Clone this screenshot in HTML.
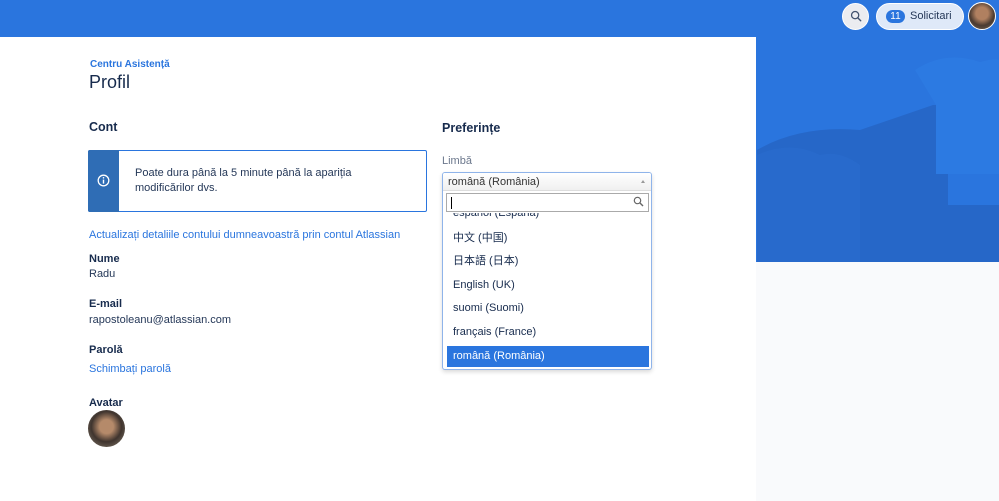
<!DOCTYPE html>
<html><head><meta charset="utf-8"><style>
*{margin:0;padding:0;box-sizing:border-box}
body{width:999px;height:501px;overflow:hidden;background:#f9fafc;font-family:"Liberation Sans","Noto Sans CJK SC",sans-serif;color:#172b4d;position:relative}
.a{position:absolute;white-space:nowrap}
.blue{position:absolute;left:0;top:0;width:999px;height:262px;background:#2a75de;overflow:hidden}
.panel{position:absolute;left:0;top:37px;width:756px;height:464px;background:#fff}
.lab{font-size:11px;font-weight:bold;color:#172b4d}
.val{font-size:11px;color:#253858}
.lnk{font-size:11px;color:#2a75de}
.it{position:absolute;left:4px;width:202px;height:21px;font-size:11px;line-height:21px;padding-left:6px;color:#172b4d}
</style></head><body>
<div class="blue">
<svg width="999" height="262" style="position:absolute;left:0;top:0">
<path d="M915 70 Q945 50 980 62 Q995 58 999 60 V174 H936 V105 Z" fill="#2c7ae2"/>
<path d="M757 262 V150 Q800 125 860 130 L933 105 L936 105 V174 H948 V205 H999 V262 Z" fill="#2667c8"/>
<path d="M757 262 V155 Q790 140 820 155 Q840 150 860 165 V262 Z" fill="#2a6dd0" opacity=".5"/>
</svg>
<div class="a" style="left:842px;top:3px;width:27px;height:27px;border-radius:50%;background:#ebecf0;border:1px solid #fff"></div>
<svg class="a" style="left:850px;top:10px" width="12" height="12" viewBox="0 0 14 14"><circle cx="6" cy="6" r="4.2" fill="none" stroke="#42526e" stroke-width="1.5"/><path d="M9 9 L12.5 12.5" stroke="#42526e" stroke-width="1.6" stroke-linecap="round"/></svg>
<div class="a" style="left:876px;top:3px;width:88px;height:27px;border-radius:14px;background:#dfe9f8;border:1px solid #fff"></div>
<div class="a" style="left:886px;top:10px;width:19px;height:13px;border-radius:7px;background:#2a75de;color:#fff;font-size:10px;text-align:center;line-height:13px">11</div>
<div class="a" style="left:910px;top:9px;font-size:11px;color:#253858;line-height:15px">Solicitari</div>
<div class="a" style="left:968px;top:2px;width:28px;height:28px;border-radius:50%;background:radial-gradient(circle at 50% 40%,#b08060 0 30%,#4a3a30 60%,#7a6a5a);border:1.5px solid #fff"></div>
</div>
<div class="panel"></div>
<div class="a" style="left:90px;top:59px;font-size:10px;font-weight:bold;color:#2a75de">Centru Asistență</div>
<div class="a" style="left:89px;top:72px;font-size:18px;color:#172b4d">Profil</div>
<div class="a" style="left:89px;top:120px;font-size:12.5px;font-weight:bold">Cont</div>
<div class="a" style="left:88px;top:150px;width:339px;height:62px;border:1px solid #2a75de;border-radius:2px;background:#fff"></div>
<div class="a" style="left:88px;top:150px;width:31px;height:62px;background:#2f6db5;border-radius:2px 0 0 2px"></div>
<svg class="a" style="left:97px;top:174px" width="13" height="13" viewBox="0 0 13 13"><circle cx="6.5" cy="6.5" r="5.3" fill="none" stroke="#fff" stroke-width="1.3"/><path d="M6.5 5.6V9.6" stroke="#fff" stroke-width="1.4"/><circle cx="6.5" cy="3.8" r=".8" fill="#fff"/></svg>
<div class="a val" style="left:135px;top:166px;line-height:15px">Poate dura până la 5 minute până la apariția<br>modificărilor dvs.</div>
<div class="a lnk" style="left:89px;top:229px">Actualizați detaliile contului dumneavoastră prin contul Atlassian</div>
<div class="a lab" style="left:89px;top:253px">Nume</div>
<div class="a val" style="left:89px;top:268px">Radu</div>
<div class="a lab" style="left:89px;top:298px">E-mail</div>
<div class="a val" style="left:89px;top:314px">rapostoleanu@atlassian.com</div>
<div class="a lab" style="left:89px;top:344px">Parolă</div>
<div class="a lnk" style="left:89px;top:363px">Schimbați parolă</div>
<div class="a lab" style="left:89px;top:397px">Avatar</div>
<div class="a" style="left:88px;top:410px;width:37px;height:37px;border-radius:50%;background:radial-gradient(circle at 50% 45%,#b58a6a 0 25%,#3f342e 55%,#8a8070)"></div>
<div class="a" style="left:442px;top:121px;font-size:12.5px;font-weight:bold">Preferințe</div>
<div class="a" style="left:442px;top:155px;font-size:11px;color:#6b778c">Limbă</div>
<div class="a" style="left:442px;top:172px;width:210px;height:198px;border:1px solid #8fb4ea;border-radius:3px;background:#fff;box-shadow:0 2px 4px rgba(0,0,0,.15);overflow:hidden">
<div style="position:absolute;left:0;top:0;width:208px;height:18px;background:linear-gradient(#fff,#f0f0f0);border-bottom:1px solid #ddd;font-size:11px;line-height:18px;padding-left:5px;color:#333">română (România)</div>
<div style="position:absolute;right:6px;top:7px;width:0;height:0;border-left:2.5px solid transparent;border-right:2.5px solid transparent;border-bottom:3px solid #999"></div>
<div style="position:absolute;left:3px;top:20px;width:203px;height:19px;border:1px solid #aaa;background:#fff"></div>
<div style="position:absolute;left:8px;top:24px;width:1px;height:12px;background:#000"></div>
<svg style="position:absolute;left:190px;top:23px" width="11" height="11" viewBox="0 0 11 11"><circle cx="4.5" cy="4.5" r="3.2" fill="none" stroke="#666" stroke-width="1.2"/><path d="M7 7L10 10" stroke="#666" stroke-width="1.4"/></svg>
<div class="it" style="top:30px;clip-path:inset(10px 0 0 0)">español (España)</div>
<div class="it" style="top:55px">中文 (中国)</div>
<div class="it" style="top:78px">日本語 (日本)</div>
<div class="it" style="top:102px">English (UK)</div>
<div class="it" style="top:125px">suomi (Suomi)</div>
<div class="it" style="top:149px">français (France)</div>
<div class="it" style="top:173px;background:#2a75de;color:#fff">română (România)</div>
</div>
</body></html>
